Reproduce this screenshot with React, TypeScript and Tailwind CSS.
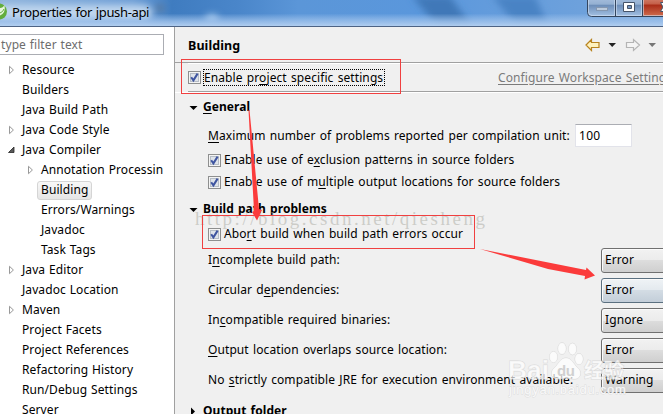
import type { ReactNode } from 'react'
import clsx from 'clsx'

type TreeItem = {
  label: string
  arrow?: 'closed' | 'open'
  nested?: boolean
  selected?: boolean
}

type Severity = {
  before: string
  key: string
  after: string
  value: string
  hot?: boolean
}

const tree: TreeItem[] = [
  { label: 'Resource', arrow: 'closed' },
  { label: 'Builders' },
  { label: 'Java Build Path' },
  { label: 'Java Code Style', arrow: 'closed' },
  { label: 'Java Compiler', arrow: 'open' },
  { label: 'Annotation Processing', arrow: 'closed', nested: true },
  { label: 'Building', nested: true, selected: true },
  { label: 'Errors/Warnings', nested: true },
  { label: 'Javadoc', nested: true },
  { label: 'Task Tags', nested: true },
  { label: 'Java Editor', arrow: 'closed' },
  { label: 'Javadoc Location' },
  { label: 'Maven', arrow: 'closed' },
  { label: 'Project Facets' },
  { label: 'Project References' },
  { label: 'Refactoring History' },
  { label: 'Run/Debug Settings' },
  { label: 'Server' },
]

const severities: Severity[] = [
  { before: 'I', key: 'n', after: 'complete build path:', value: 'Error' },
  { before: 'Circular d', key: 'e', after: 'pendencies:', value: 'Error', hot: true },
  { before: 'In', key: 'c', after: 'ompatible required binaries:', value: 'Ignore' },
  { before: '', key: 'O', after: 'utput location overlaps source location:', value: 'Error' },
  { before: 'No ', key: 's', after: 'trictly compatible JRE for execution environment available:', value: 'Warning' },
]

function Key({ children }: { children: ReactNode }) {
  return <span className="underline decoration-1 underline-offset-2">{children}</span>
}

function Checkbox() {
  return (
    <svg width="13" height="13" viewBox="0 0 13 13" className="shrink-0">
      <rect x="0.5" y="0.5" width="12" height="12" fill="#f4f4f4" stroke="#8e8f8f" />
      <rect x="2.5" y="2.5" width="8" height="8" fill="#dfe4ea" stroke="#b6bdc6" />
      <path d="M3.2 6.2 L5.4 9.4 L9.6 2.6" fill="none" stroke="#3f55a0" strokeWidth="2" />
    </svg>
  )
}

function TreeArrow({ kind }: { kind?: 'closed' | 'open' }) {
  return (
    <svg width="7" height="10" viewBox="0 0 7 10" className="shrink-0">
      {kind === 'closed' && <path d="M1.5 1.3 L5.4 5 L1.5 8.7 Z" fill="#fff" stroke="#989898" />}
      {kind === 'open' && <path d="M6 2 V7.5 H0.5 Z" fill="#595959" stroke="#262626" strokeWidth="0.8" />}
    </svg>
  )
}

function Heading({ open, children }: { open: boolean; children: ReactNode }) {
  return (
    <div className="flex h-5 items-center font-bold tracking-[0.05px]">
      <svg width="9" height="9" viewBox="0 0 9 9" className="mr-[5px] shrink-0">
        <path d={open ? 'M0.5 3 H8.5 L4.5 7 Z' : 'M2 0.5 L6 4.5 L2 8.5 Z'} fill="#000" />
      </svg>
      <span>{children}</span>
    </div>
  )
}

function TitleBar() {
  return (
    <header className="relative flex h-[27px] shrink-0 justify-between overflow-hidden border-b border-[#4d6384] bg-[#5b94d4]">
      <svg className="absolute inset-0" width="663" height="27" viewBox="0 0 663 27">
        <defs>
          <linearGradient id="sky" x1="0" x2="1" y1="0" y2="0">
            <stop offset="0" stopColor="#8fb4dc" />
            <stop offset="0.2" stopColor="#6f9fd6" />
            <stop offset="0.26" stopColor="#3f7cc0" />
            <stop offset="0.36" stopColor="#4a86ca" />
            <stop offset="0.45" stopColor="#5b96d8" />
            <stop offset="0.63" stopColor="#5a97dc" />
            <stop offset="1" stopColor="#77a6dc" />
          </linearGradient>
          <linearGradient id="fade" x1="0" x2="0" y1="0" y2="1">
            <stop offset="0.5" stopColor="#a9c9ef" stopOpacity="0" />
            <stop offset="0.8" stopColor="#9fc2eb" stopOpacity="0.85" />
            <stop offset="1" stopColor="#b7d2f1" />
          </linearGradient>
          <filter id="soft" x="-20%" y="-60%" width="140%" height="220%">
            <feGaussianBlur stdDeviation="3.5" />
          </filter>
        </defs>
        <rect width="663" height="27" fill="url(#sky)" />
        <g filter="url(#soft)">
          <path d="M412 -4 H450 L474 30 H440 Z" fill="#3f78b8" />
          <path d="M492 -4 H535 L550 30 H520 Z" fill="#4a83c4" />
          <rect x="-4" y="5" width="156" height="16" rx="8" fill="#bfd6ee" />
          <ellipse cx="160" cy="8" rx="5" ry="3" fill="#5b7898" />
          <ellipse cx="212" cy="19" rx="7" ry="5" fill="#9cc2ea" />
        </g>
        <rect width="663" height="27" fill="url(#fade)" />
      </svg>
      <div className="relative flex items-start">
        <svg width="7" height="22" viewBox="0 0 7 22">
          <circle cx="-1" cy="11.500" r="8" fill="#63ad3c" />
          <path d="M0 8 Q3 8 4.500 5 Q6 13 0 15.500" fill="#e7f5dc" />
          <path d="M0 13 Q3 12 4 9" fill="none" stroke="#63ad3c" />
        </svg>
        <h1 className="ml-[5px] mt-[2px] text-[13px] leading-5 tracking-[-0.34px]">Properties for jpush-api</h1>
      </div>
      <svg width="76" height="17" viewBox="0 0 76 17" className="relative">
        <defs>
          <linearGradient id="glass" x1="0" x2="0" y1="0" y2="1">
            <stop offset="0" stopColor="#a3bcdb" />
            <stop offset="0.3" stopColor="#94b0d2" />
            <stop offset="0.35" stopColor="#6c8db8" />
            <stop offset="1" stopColor="#a5c2e4" />
          </linearGradient>
          <linearGradient id="red" x1="0" x2="0" y1="0" y2="1">
            <stop offset="0" stopColor="#d07a66" />
            <stop offset="0.3" stopColor="#c45f48" />
            <stop offset="0.35" stopColor="#a92c17" />
            <stop offset="1" stopColor="#cf6b4d" />
          </linearGradient>
        </defs>
        <path d="M0.500 -1 V12.500 Q0.500 16.500 4.500 16.500 H77 V-1 Z" fill="url(#glass)" stroke="#34465f" />
        <rect x="56" y="-1" width="21" height="17" fill="url(#red)" />
        <path d="M28.500 0 V16 M55.500 0 V16" stroke="#34465f" />
        <path d="M1.500 0 V12 Q1.500 15.500 5 15.500 H27.500 V0 M29.500 0 V15.500 H54.500 V0 M56.500 0 V15.500 H76" fill="none" stroke="#d5e3f3" strokeOpacity="0.6" />
        <rect x="9.500" y="7.500" width="11" height="3" fill="#bccbdd" stroke="#8497b0" />
        <path d="M36.500 2.500 H47.500 V11.500 H36.500 Z M40.500 5.500 V8.500 H44.500 V5.500 Z" fill="#fff" fillRule="evenodd" stroke="#46546a" />
        <path d="M73.500 2.500 H77 V11.500 H73.500 L76 7 Z" fill="#fff" stroke="#46546a" />
      </svg>
    </header>
  )
}

function Sidebar() {
  return (
    <aside className="flex w-[174px] shrink-0 flex-col bg-white">
      <div className="mt-[7px] flex h-[21px] w-[164px] items-center border border-l-0 border-[#abadb3] pl-[1px] text-[#6d6d6d]">
        <span>type filter text</span>
      </div>
      <ul className="mt-[5px] w-[163px] overflow-hidden">
        {tree.map(item => (
          <li
            key={item.label}
            className={clsx('flex h-5 items-center whitespace-nowrap', item.nested ? 'pl-[27px]' : 'pl-2')}
          >
            <TreeArrow kind={item.arrow} />
            <span
              className={clsx(
                'flex h-[19px] items-center',
                item.selected
                  ? 'ml-[3px] rounded-[3px] border border-[#d5d5d5] bg-gradient-to-b from-[#f8f8f8] to-[#e5e5e5] px-[3px]'
                  : 'ml-[7px]',
              )}
            >
              {item.label}
            </span>
          </li>
        ))}
      </ul>
    </aside>
  )
}

function HistoryButtons() {
  return (
    <svg width="78" height="15" viewBox="0 0 78 15" className="mt-[2px] shrink-0">
      <path d="M1 7 L6.500 1.500 V4.500 H14 V9.500 H6.500 V12.500 Z" fill="#fff2bd" stroke="#b8831f" strokeWidth="1.200" />
      <path d="M23.500 5 H31 L27.200 9 Z" fill="#222" />
      <path d="M54.500 7 L48.500 1.500 V4.500 H41.500 V9.500 H48.500 V12.500 Z" fill="#f4f4f4" stroke="#b4b4b4" strokeWidth="1.200" />
      <path d="M63.500 5 H71 L67.200 9 Z" fill="#777" />
    </svg>
  )
}

function Settings() {
  return (
    <main className="flex min-w-0 flex-1 flex-col overflow-hidden border-l border-[#a0a0a0] bg-[#f0f0f0] whitespace-nowrap [word-spacing:1px]">
      <div className="flex h-[36px] shrink-0 items-center justify-between border-b border-[#a0a0a0] pl-[13px]">
        <h2 className="mt-[2px] text-[12.5px] font-bold">Building</h2>
        <HistoryButtons />
      </div>
      <div className="ml-[13px] flex h-[29px] shrink-0 items-center border-t border-b border-t-white border-b-[#a0a0a0]">
        <Checkbox />
        <span className="ml-[2px] flex h-[17px] w-[182px] shrink-0 items-center border border-dotted border-black">
          <span>Enable pr<Key>o</Key>ject specific settings</span>
        </span>
        <span className="ml-[113px] shrink-0 text-[#7b7b7b] underline underline-offset-2">Configure Workspace Settings...</span>
      </div>

      <div className="flex flex-col border-t border-white pl-[14px]">
        <div className="mt-1"><Heading open><Key>G</Key>eneral</Heading></div>
        <div className="mt-[7px] ml-[19px] flex h-[23px] items-center">
          <span className="w-[367px]"><Key>M</Key>aximum number of problems reported per compilation unit:</span>
          <span className="flex h-[23px] w-[57px] items-center border border-[#e2e3ea] border-t-[#abadb3] bg-white pl-[3px] tracking-[0.3px]">100</span>
        </div>
        <div className="mt-[2px] ml-[19px] flex h-[22px] items-center gap-[3px]">
          <Checkbox />
          <span>Enable use of e<Key>x</Key>clusion patterns in source folders</span>
        </div>
        <div className="ml-[19px] flex h-[22px] items-center gap-[3px]">
          <Checkbox />
          <span>Enable use of m<Key>u</Key>ltiple output locations for source folders</span>
        </div>

        <div className="mt-[6px]"><Heading open><Key>B</Key>uild path problems</Heading></div>
        <div className="mt-1 ml-[19px] flex h-[22px] items-center gap-[3px]">
          <Checkbox />
          <span>Abo<Key>r</Key>t build when build path errors occur</span>
        </div>
        {severities.map(s => (
          <div key={s.before + s.key} className="ml-[19px] flex h-[30px] items-center">
            <span className="w-[393px] shrink-0">{s.before}<Key>{s.key}</Key>{s.after}</span>
            <span
              className={clsx(
                'flex h-[25px] w-24 shrink-0 items-center rounded-[3px] border pl-[3px] shadow-[inset_1px_1px_0_#fbfbfb]',
                s.hot
                  ? 'border-[#5b7080] bg-[linear-gradient(#eff3f6,#e3e9ee_50%,#d3dce4_50%,#c3ced9)]'
                  : 'border-[#707070] bg-[linear-gradient(#f2f2f2,#ebebeb_50%,#dddddd_50%,#cfcfcf)]',
              )}
            >
              {s.value}
            </span>
          </div>
        ))}
        <div className="mt-[6px]"><Heading open={false}>Output folder</Heading></div>
      </div>
    </main>
  )
}

// Arrows, frames and stamps that lie over the dialog
function Annotations() {
  return (
    <svg className="pointer-events-none absolute inset-0" width="663" height="414" viewBox="0 0 663 414">
      <text x="195" y="225" fontFamily="Liberation Serif" fontSize="19" textLength="290" fill="#a9a9a0" fillOpacity="0.5">
        http://blog.csdn.net/qiesheng
      </text>
      <g fill="none" stroke="#f04040">
        <rect x="181.500" y="59.500" width="219" height="34" />
        <rect x="202.500" y="215.500" width="272" height="33" />
      </g>
      <g fill="#fb3b3b">
        <path d="M248.500 110 L249.500 110 L259 209 L262 210 L257 220.500 L252 212 L254 211 Z" />
        <path d="M480 249 L586 270 L586.500 267.500 L595 275.500 L584.500 279.500 L585 276 L548 269 Z" />
      </g>
      <g fill="#fff" fillOpacity="0.7" stroke="#d4d4d4" strokeOpacity="0.8" strokeWidth="1" paintOrder="stroke">
        <text x="508" y="379" fontFamily="Liberation Sans" fontWeight="bold" fontSize="26" textLength="41" lengthAdjust="spacingAndGlyphs">Bai</text>
        <ellipse cx="553.500" cy="357" rx="4" ry="5.500" />
        <ellipse cx="562" cy="348.500" rx="4" ry="5.800" />
        <ellipse cx="572.500" cy="349" rx="4" ry="5.800" />
        <ellipse cx="579" cy="359" rx="4" ry="5.500" />
        <path d="M566 358 C560 358 559 364 554 368 C549 373 552 380 559 379 Q566 377 573 379 C580 380 583 373 578 368 C573 364 572 358 566 358 Z" />
        <text x="584" y="378" fontFamily="Noto Sans CJK SC" fontWeight="bold" fontSize="20" textLength="40">经验</text>
      </g>
      <text
        x="509"
        y="394"
        fontFamily="Liberation Sans"
        fontSize="13"
        textLength="117"
        fill="#fff"
        fillOpacity="0.85"
        stroke="#d8d8d8"
        strokeWidth="1"
        strokeOpacity="0.8"
        paintOrder="stroke"
      >
        jingyan.baidu.com
      </text>
      <text x="557" y="376" fontFamily="Liberation Sans" fontWeight="bold" fontSize="15" textLength="18" fill="#d0d0d0">du</text>
    </svg>
  )
}

export default function App() {
  return (
    <div className="relative flex h-[414px] w-[663px] flex-col overflow-hidden bg-[#f0f0f0] font-['Noto_Sans',sans-serif] text-[12px] leading-5 tracking-[0.09px] text-black [word-spacing:0.6px]">
      <TitleBar />
      <div className="flex min-h-0 flex-1">
        <Sidebar />
        <Settings />
      </div>
      <Annotations />
    </div>
  )
}
